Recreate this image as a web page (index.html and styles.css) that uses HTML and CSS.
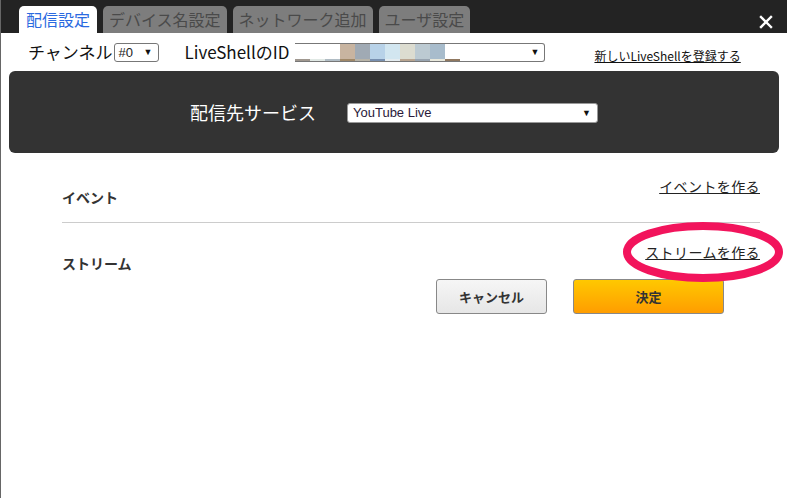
FILE: index.html
```html
<!DOCTYPE html>
<html lang="ja">
<head>
  <meta charset="UTF-8" />
  <title>配信設定</title>
  <link rel="stylesheet" href="styles.css">
</head>
<body>
  <div class="window">
    <div class="titlebar">
      <div class="tabs">
        <div class="tab active">配信設定</div>
        <div class="tab">デバイス名設定</div>
        <div class="tab">ネットワーク追加</div>
        <div class="tab">ユーザ設定</div>
      </div>
      <div class="close">
        <svg width="14" height="14" viewBox="0 0 14 14">
          <path d="M2 2 L12 12 M12 2 L2 12" stroke="#fff" stroke-width="2.4" stroke-linecap="square"/>
        </svg>
      </div>
    </div>

    <div class="device-row">
      <span class="label">チャンネル</span>
      <div class="select channel">#0<span class="arrow">▼</span></div>
      <span class="label id-label">LiveShellのID</span>
      <div class="select device-id">
        <div class="blur">
          <span style="background:#fff;border-color:#a09890"></span>
          <span style="background:#fff;border-color:#e0e8e4"></span>
          <span style="background:#fff;border-color:#b0bcc4"></span>
          <span style="background:#c8b4a0;border-color:#a08868"></span>
          <span style="background:#a0aab4;border-color:#b8b4a8"></span>
          <span style="background:#b8d2e8;border-color:#7890b0"></span>
          <span style="background:#d2e6f0;border-color:#e4ecf0"></span>
          <span style="background:#dcdcd0;border-color:#b8a490"></span>
          <span style="background:#bccad2;border-color:#98a4b0"></span>
          <span style="background:#a8bccc;border-color:#e8e8dc"></span>
          <span style="background:#fff;border-color:#907860"></span>
        </div>
        <span class="arrow">▼</span>
      </div>
      <a class="register" href="#">新しいLiveShellを登録する</a>
    </div>

    <div class="service-panel">
      <span class="service-label">配信先サービス</span>
      <div class="select service">YouTube Live<span class="arrow">▼</span></div>
    </div>

    <div class="settings">
      <div class="setting-row event">
        <a class="create-link" href="#">イベントを作る</a>
        <span class="setting-label">イベント</span>
      </div>
      <div class="setting-row stream">
        <a class="create-link" href="#">ストリームを作る</a>
        <span class="setting-label">ストリーム</span>
        <svg class="highlight" width="164" height="64" viewBox="0 0 164 64">
          <ellipse cx="82" cy="32" rx="76" ry="26" fill="none" stroke="#f2145c" stroke-width="8"/>
        </svg>
      </div>
      <div class="actions">
        <button class="btn cancel">キャンセル</button>
        <button class="btn ok">決定</button>
      </div>
    </div>
  </div>
</body>
</html>
```

FILE: styles.css
```css
body {
  margin: 0;
  font-family: "Noto Sans CJK JP", "Liberation Sans", sans-serif;
  background-color: #fff;
  color: #111;
}

.window {
  height: 498px;
  border-left: 1px solid #666;
  box-sizing: border-box;
  overflow: hidden;
}

.titlebar {
  height: 33px;
  background-color: #232323;
  display: flex;
  justify-content: space-between;
  align-items: flex-end;
  margin-left: -1px;
}

.tabs {
  display: flex;
  gap: 6px;
  padding-left: 19px;
}

.tab {
  height: 27px;
  line-height: 27px;
  padding: 0 6px;
  font-size: 16px;
  background-color: #7d7d7d;
  color: #4a4a4a;
  border-radius: 5px 5px 0 0;
}

.tab.active {
  background-color: #fff;
  color: #2a6ae0;
  padding: 0 7px;
}

.close {
  align-self: center;
  margin-right: 14px;
  height: 14px;
}

.device-row {
  height: 38px;
  display: flex;
  align-items: center;
  padding-left: 27px;
}

.label {
  font-size: 17px;
  line-height: 20px;
}

.id-label {
  margin-left: 26px;
  margin-right: 6px;
}

.select {
  position: relative;
  height: 19px;
  box-sizing: border-box;
  border: 1px solid #777;
  border-radius: 3px;
  background: #fff;
  font-family: "Liberation Sans", Arial, sans-serif;
  font-size: 13px;
  line-height: 17px;
  padding-left: 4px;
  color: #222;
}

.select .arrow {
  position: absolute;
  right: 5px;
  top: 0;
  font-size: 9px;
  color: #111;
}

.channel {
  width: 45px;
  margin-left: 1px;
}

.device-id {
  width: 250px;
  padding-left: 0;
  border-left: none;
  border-radius: 0 3px 3px 0;
}

.blur {
  display: flex;
  height: 17px;
}

.blur span {
  width: 15px;
  box-sizing: border-box;
  border-bottom: 2px solid;
}

.register {
  margin-left: 49px;
  font-size: 12px;
  color: #111;
  margin-top: 6px;
}

.service-panel {
  height: 82px;
  margin: 0 8px 0 8px;
  background-color: #333;
  border-radius: 6px;
  display: flex;
  justify-content: center;
  align-items: center;
  gap: 31px;
}

.service-label {
  color: #fff;
  font-size: 18px;
}

.service {
  width: 251px;
  height: 20px;
  line-height: 18px;
  margin-top: 2px;
  padding-left: 5px;
  border-color: #999;
  color: #2a1a3a;
}

.service .arrow {
  right: 6px;
}

.settings {
  margin: 0 27px 0 61px;
}

.setting-row {
  position: relative;
  box-sizing: border-box;
}

.setting-row.event {
  height: 70px;
  padding-top: 34px;
  border-bottom: 1px solid #ccc;
}

.setting-row.stream {
  height: 56px;
  padding-top: 30px;
}

.create-link {
  position: absolute;
  right: 0;
  font-size: 14px;
  line-height: 20px;
  letter-spacing: 0.4px;
  color: #222;
}

.event .create-link {
  top: 23px;
}

.stream .create-link {
  top: 19px;
}

.setting-label {
  display: block;
  font-size: 14px;
  line-height: 20px;
  font-weight: bold;
  color: #333;
}

.highlight {
  position: absolute;
  right: -25px;
  top: -3px;
}

.actions {
  display: flex;
  gap: 26px;
  justify-content: flex-end;
  padding-right: 36px;
}

.btn {
  height: 35px;
  border: 1px solid #888;
  border-radius: 3px;
  font-family: "Noto Sans CJK JP", sans-serif;
  font-size: 13px;
  font-weight: bold;
  color: #333;
  cursor: pointer;
}

.cancel {
  width: 111px;
  background: linear-gradient(#f6f6f6, #e6e6e6);
}

.ok {
  width: 151px;
  background: linear-gradient(#ffc800, #ff9d00);
}
```
